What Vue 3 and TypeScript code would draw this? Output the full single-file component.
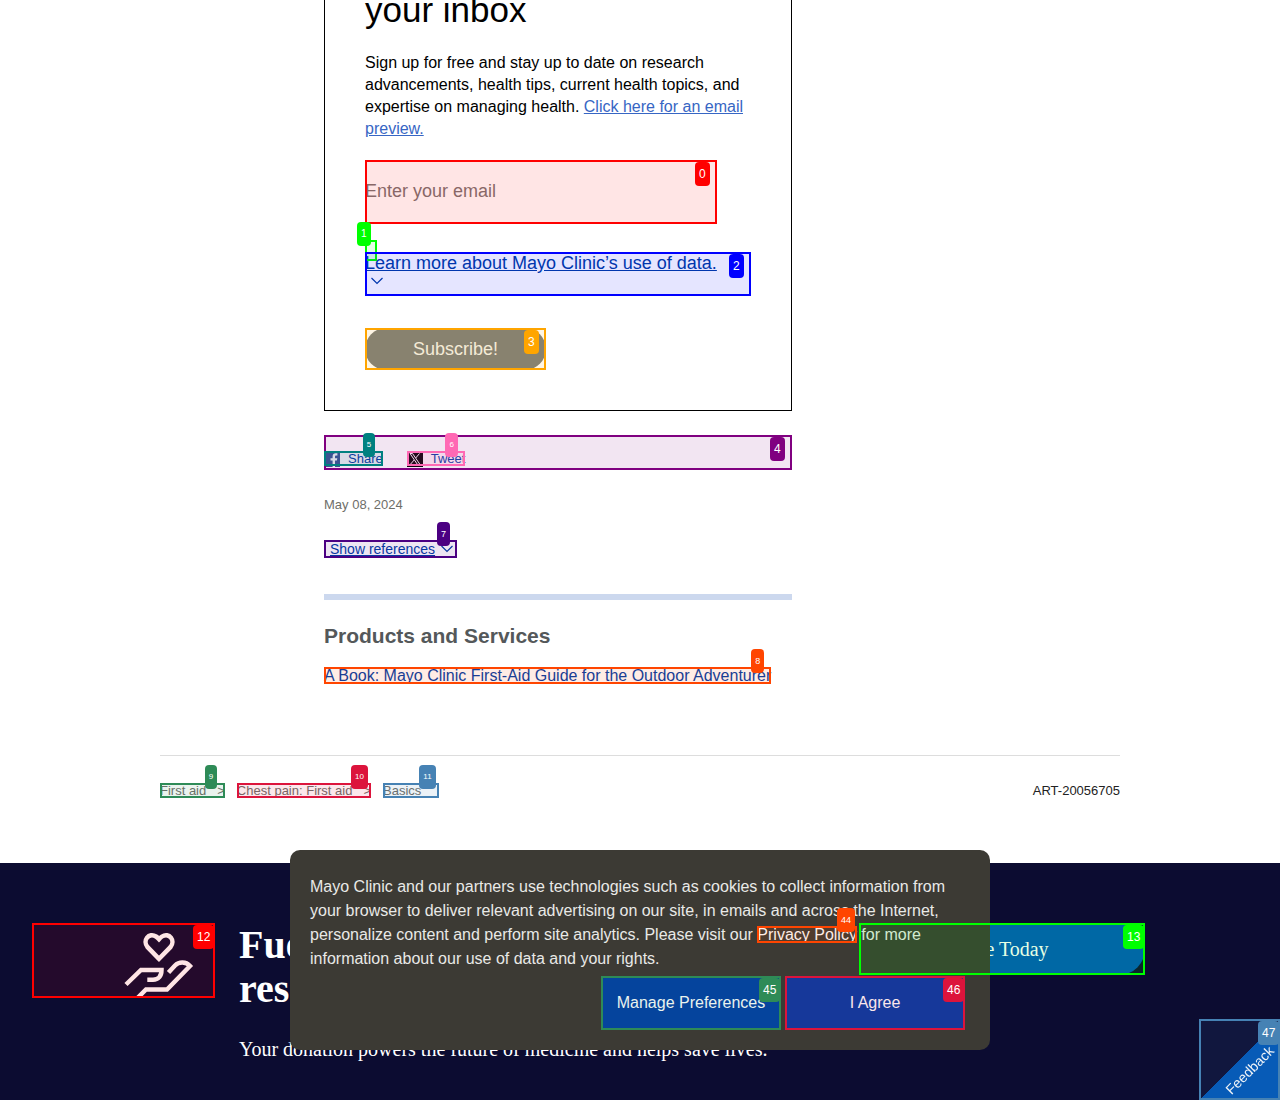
<script setup lang="ts">
import { ref } from 'vue'

interface Crumb {
  label: string
  tag: number
  tone: string
  last: boolean
}

const email = ref('')

const crumbs: Crumb[] = [
  { label: 'First aid', tag: 9, tone: 'seagreen', last: false },
  { label: 'Chest pain: First aid', tag: 10, tone: 'crimson', last: false },
  { label: 'Basics', tag: 11, tone: 'steel', last: true },
]
</script>

<template>
  <div class="page">
    <main class="container">
      <div class="column">
        <section class="card">
          <h2>your inbox</h2>
          <p class="intro">
            Sign up for free and stay up to date on research advancements, health tips, current
            health topics, and expertise on managing health.
            <a href="#preview">Click here for an email preview.</a>
          </p>
          <form @submit.prevent>
            <div class="marked field">
              <input v-model="email" type="email" placeholder="Enter your email" aria-label="Enter your email" />
              <span class="mark red"><b class="tag">0</b></span>
            </div>
            <div class="marked learn">
              <a href="#data">
                <span class="underlined">Learn more about Mayo Clinic’s use of data.</span>
                <svg class="chevron" viewBox="0 0 12 8"><path d="M.5 1L6 6.500 11.500 1" /></svg>
              </a>
              <span class="mark lime hint"><b class="tag small s10">1</b></span>
              <span class="mark blue"><b class="tag">2</b></span>
            </div>
            <div class="marked subscribe">
              <button type="submit">Subscribe!</button>
              <span class="mark orange"><b class="tag">3</b></span>
            </div>
          </form>
        </section>

        <div class="marked share">
          <span class="mark purple"><b class="tag">4</b></span>
          <a class="marked" href="#share">
            <svg viewBox="0 0 16 16">
              <path fill="#3b5998" d="M0 0h16v16H0z" />
              <path fill="#fff" d="M8.600 16V9.600H6.500V7.200h2.100V5.500c0-2.200 1.200-3.300 3.200-3.300.9 0 1.600.1 1.600.1v2.200h-1.100c-1 0-1.300.5-1.300 1.200v1.500h2.300l-.4 2.400H11V16z" />
            </svg>
            Share
            <span class="mark teal"><b class="tag small">5</b></span>
          </a>
          <a class="marked" href="#tweet">
            <svg viewBox="0 0 16 16">
              <path d="M0 0h16v16H0z" />
              <path fill="none" stroke="#fff" d="M3 2.500h2.500l7.500 11h-2.500zM12.500 2.500L8.700 7M7.200 9l-4 4.500" />
            </svg>
            Tweet
            <span class="mark pink"><b class="tag small">6</b></span>
          </a>
        </div>

        <p class="date">May 08, 2024</p>

        <button class="marked references" type="button">
          <span class="underlined">Show references</span>
          <svg class="chevron" viewBox="0 0 12 8"><path d="M.5 1L6 6.500 11.500 1" /></svg>
          <span class="mark indigo"><b class="tag small s9">7</b></span>
        </button>

        <section class="products">
          <h3>Products and Services</h3>
          <a class="marked" href="#book">
            A Book: Mayo Clinic First-Aid Guide for the Outdoor Adventurer
            <span class="mark flame"><b class="tag small s9">8</b></span>
          </a>
        </section>
      </div>

      <footer class="trail">
        <nav aria-label="Breadcrumb">
          <a v-for="c in crumbs" :key="c.tag" class="marked" :class="{ last: c.last }" href="#crumb">
            <span>{{ c.label }}</span><span v-if="!c.last" class="sep">&gt;</span>
            <span class="mark" :class="c.tone"><b class="tag small">{{ c.tag }}</b></span>
          </a>
        </nav>
        <span>ART-20056705</span>
      </footer>
    </main>

    <section class="banner">
      <a class="marked giving" href="#giving" aria-label="Giving">
        <svg viewBox="0 0 75 75">
          <path d="M39 35.800L27.600 24.200C22 17.500 29 9 36 13.500Q37.500 14.500 39 16.200Q40.500 14.500 42 13.500C49 9 56 17.500 50.400 24.200Z" />
          <path d="M6 61.500L21 47H41.500C41.500 53 38.500 56.700 33 56.700H27.300" />
          <path d="M17 75.500L26 66.500H47L70 43C66 38.500 59 38.500 55 42.500L48.500 49.500" />
        </svg>
        <span class="mark red"><b class="tag">12</b></span>
      </a>
      <div>
        <h2>Fuel groundbreaking medical research!</h2>
        <p>Your donation powers the future of medicine and helps save lives.</p>
      </div>
      <a class="marked give" href="#give">
        Give Today
        <span class="mark lime"><b class="tag">13</b></span>
      </a>
    </section>

    <div class="consent" role="dialog" aria-label="Cookie notice">
      <p>
        Mayo Clinic and our partners use technologies such as cookies to collect information from
        your browser to deliver relevant advertising on our site, in emails and across the Internet,
        personalize content and perform site analytics. Please visit our
        <a class="marked" href="#privacy">Privacy Policy<span class="mark flame"><b class="tag small s9">44</b></span></a>
        for more information about our use of data and your rights.
      </p>
      <div class="actions">
        <div class="marked">
          <button type="button">Manage Preferences</button>
          <span class="mark seagreen"><b class="tag">45</b></span>
        </div>
        <div class="marked">
          <button type="button">I Agree</button>
          <span class="mark crimson"><b class="tag">46</b></span>
        </div>
      </div>
    </div>

    <button class="feedback" type="button">
      <span class="slant">Feedback</span>
      <span class="mark steel"><b class="tag">47</b></span>
    </button>
  </div>
</template>

<style>
body {
  margin: 0;
}
</style>

<style scoped>
* {
  box-sizing: border-box;
}
.page {
  display: flow-root;
  overflow: hidden;
  background: #fff;
  color: #000;
  font-family: 'Liberation Sans', Arial, sans-serif;
  font-size: 16px;
  line-height: 22px;
}
h2,
h3,
p {
  margin: 0;
}
a {
  color: #003da5;
  text-decoration: none;
}
button {
  font-family: inherit;
  border: 0;
  padding: 0;
}
svg {
  display: block;
  flex: none;
}

/* numbered outlines */
.marked {
  position: relative;
}
.mark {
  position: absolute;
  inset: 0;
  z-index: 20;
  border: 2px solid rgb(var(--tone));
  background: rgba(var(--tone), 0.1);
  pointer-events: none;
}
.tag {
  position: absolute;
  top: 0;
  left: calc(100% - 20px);
  height: 24px;
  padding: 0 4px;
  border-radius: 4px;
  background: rgb(var(--tone));
  color: #fff;
  font: 12px/24px 'Liberation Sans', Arial, sans-serif;
}
.tag.small {
  top: -20px;
  left: calc(100% - 18px);
  font-size: 8px;
}
.tag.s9 {
  font-size: 9px;
}
.tag.s10 {
  font-size: 10px;
}
.red { --tone: 255, 0, 0; }
.lime { --tone: 0, 255, 0; }
.blue { --tone: 0, 0, 255; }
.orange { --tone: 255, 165, 0; }
.purple { --tone: 128, 0, 128; }
.teal { --tone: 0, 128, 128; }
.pink { --tone: 255, 105, 180; }
.indigo { --tone: 75, 0, 130; }
.flame { --tone: 255, 69, 0; }
.seagreen { --tone: 46, 139, 87; }
.crimson { --tone: 220, 20, 60; }
.steel { --tone: 70, 130, 180; }

.container {
  max-width: 960px;
  margin: 0 auto;
}
.column {
  max-width: 468px;
  margin-left: 164px;
}
.card {
  border: 1px solid #000;
  border-top: 0;
  padding: 0 40px 40px;
}
.card h2 {
  font-size: 35px;
  font-weight: 400;
  line-height: 20px;
  margin-bottom: 32px;
}
.intro a {
  color: #3766c4;
  text-decoration: underline;
}
.field {
  width: 352px;
  max-width: 100%;
  margin-top: 20px;
}
.field input {
  display: block;
  width: 100%;
  height: 64px;
  padding: 0 0 2px;
  border: 0;
  outline: 0;
  background: transparent;
  font: 18px 'Liberation Sans', Arial, sans-serif;
}
.field input::placeholder {
  color: #7b7373;
}
.learn {
  margin-top: 28px;
  height: 44px;
  font-size: 18px;
}
.learn a {
  display: block;
}
.learn .chevron {
  margin: 3px 0 0 6px;
}
.learn .hint {
  inset: -12px auto auto 0;
  width: 12px;
  height: 21px;
}
.underlined {
  text-decoration: underline;
}
.chevron {
  width: 12px;
  height: 8px;
  fill: none;
  stroke: #003da5;
  stroke-width: 1.200;
}
.subscribe {
  width: 181px;
  margin-top: 32px;
}
.subscribe button {
  display: block;
  width: 100%;
  height: 42px;
  border-radius: 21px;
  background: #7b7e7c;
  color: #f3f3ee;
  font-size: 18px;
}

.share {
  display: flex;
  gap: 24px;
  height: 35px;
  margin-top: 24px;
  padding-top: 16px;
  font-size: 13px;
}
.share a {
  display: flex;
  gap: 8px;
  height: 15px;
  line-height: 15px;
}
.share svg {
  width: 16px;
  height: 16px;
}
.date {
  margin-top: 24px;
  color: #6e6e69;
  font-size: 13px;
}
.references {
  display: flex;
  align-items: center;
  gap: 6px;
  height: 18px;
  margin-top: 24px;
  padding: 0 4px 0 6px;
  background: none;
  color: #003da5;
  font-size: 14px;
  line-height: 18px;
}
.products {
  margin-top: 36px;
  border-top: 6px solid #ccd8ee;
  padding-top: 24px;
}
.products h3 {
  color: #54585a;
  font-size: 21px;
  line-height: 24px;
}
.products a {
  display: block;
  width: fit-content;
  height: 17px;
  margin-top: 19px;
  line-height: 17px;
}
.trail {
  display: flex;
  justify-content: space-between;
  margin: 71px 0 65px;
  border-top: 1px solid #ddd;
  padding-top: 27px;
  color: #222;
  font-size: 13px;
  line-height: 15px;
}
.trail nav {
  display: flex;
  gap: 12px;
}
.trail a {
  display: flex;
  gap: 11px;
  color: #6e6e69;
}
.trail .last {
  padding-right: 18px;
}

.banner {
  display: grid;
  grid-template-columns: 183px 1fr 286px;
  align-items: start;
  gap: 24px;
  padding: 60px 135px 40px 32px;
  background: #0c0c31;
  color: #fff;
  font-family: 'Liberation Serif', 'Times New Roman', serif;
}
.giving {
  display: block;
}
.giving svg {
  width: 75px;
  height: 75px;
  margin-left: 88px;
  fill: none;
  stroke: #fff;
  stroke-width: 4.500;
}
.banner h2 {
  font-size: 40px;
  line-height: 44px;
}
.banner p {
  margin-top: 26px;
  font-size: 20px;
  line-height: 24px;
}
.give {
  height: 52px;
  border-radius: 26px;
  background: #0057b8;
  color: #fff;
  font-size: 20px;
  line-height: 52px;
  text-align: center;
}

.consent {
  position: fixed;
  bottom: 50px;
  left: 50%;
  z-index: 10;
  width: 700px;
  max-width: 100%;
  padding: 25px 20px 20px;
  transform: translateX(-50%);
  border-radius: 10px;
  background: #3c3a34;
  color: #e9e9e7;
  line-height: 24px;
}
.consent a {
  display: inline-block;
  height: 17px;
  line-height: 17px;
  color: #fff;
}
.actions {
  display: flex;
  justify-content: flex-end;
  gap: 4px;
  margin: 5px 5px 0 0;
}
.actions button {
  display: block;
  width: 180px;
  height: 54px;
  border-radius: 8px;
  background: #003da5;
  color: #fff;
  font-size: 16px;
}

.feedback {
  position: fixed;
  right: 0;
  bottom: 0;
  width: 81px;
  height: 81px;
  background: linear-gradient(135deg, transparent 50%, #0057b8 50%);
  color: #fff;
}
.slant {
  position: absolute;
  top: 40px;
  left: 20px;
  font-size: 14px;
  line-height: 22px;
  transform: rotate(-45deg);
}
</style>
